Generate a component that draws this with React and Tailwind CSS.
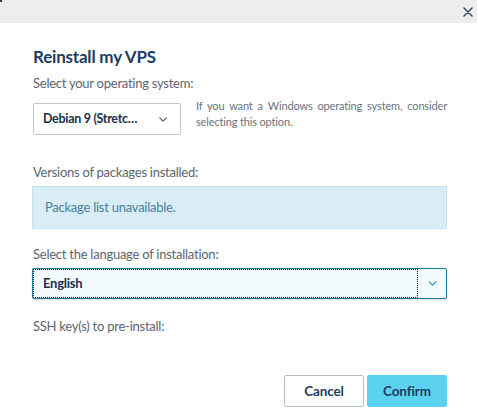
import React from 'react';

function Chevron({ className }) {
  return (
    <svg viewBox="0 0 10 6" className={className} fill="none" stroke="currentColor" strokeWidth="1.4" strokeLinecap="round" strokeLinejoin="round">
      <path d="M1 1l4 4 4-4" />
    </svg>
  );
}

export default function App() {
  return (
    <div
      className="relative h-[417px] w-[477px] overflow-hidden bg-white text-[#5b6570]"
      style={{ fontFamily: 'Lato, "Noto Sans", sans-serif' }}
    >
      <span className="absolute left-0 top-0 h-[2px] w-[2px] bg-[#1b3a5f]" />
      <header className="flex h-[23px] items-center justify-end bg-[#ecedec] pr-[4px]">
        <svg viewBox="0 0 10 10" className="h-[10px] w-[10px] text-[#3d4b5e]" fill="none" stroke="currentColor" strokeWidth="1.5" strokeLinecap="round">
          <path d="M1 1l8 8M9 1l-8 8" />
        </svg>
      </header>

      <div className="pl-[33px] pr-[30px]">
        <h1 className="mt-[22px] text-[17px] font-bold leading-[24px] tracking-[-0.2px] text-[#1c3c62]">Reinstall my VPS</h1>
        <p className="mt-[4px] text-[13px] leading-[20px] tracking-[-0.25px]">Select your operating system:</p>

        <div className="mt-[10px] flex items-start">
          <button className="flex h-[32px] w-[148px] shrink-0 items-center justify-between rounded-[2px] border border-[#c3c8cd] bg-white pl-[9px] pr-[13px] text-[12.5px] font-bold tracking-[-0.3px] text-[#1b2f4b]">
            <span>Debian 9 (Stretc…</span>
            <Chevron className="h-[5px] w-[8px] text-[#4a5768]" />
          </button>
          <p className="-mt-[5px] ml-[15px] text-justify text-[11px] leading-[16px] tracking-[-0.15px] text-[#6a737d]">
            If you want a Windows operating system, consider selecting this option.
          </p>
        </div>

        <p className="mt-[27px] text-[13px] leading-[20px] tracking-[-0.25px]">Versions of packages installed:</p>
        <div className="-ml-[1px] mt-[4px] flex h-[43px] items-center border border-[#c2e4f1] bg-[#d9edf6] px-[12px] text-[13px] tracking-[-0.25px] text-[#4a7e9c]">
          Package list unavailable.
        </div>

        <p className="mt-[15px] text-[13px] leading-[20px] tracking-[-0.25px]">Select the language of installation:</p>
        <div className="-ml-[1px] mt-[4px] flex h-[31px] rounded-[2px] border border-[#1a7d9d] bg-[#f3fbfe] shadow-[0_1px_2px_rgba(0,0,0,0.15)]">
          <div className="flex flex-1 items-center border border-dotted border-[#111] pl-[9px] text-[13px] font-bold tracking-[-0.25px] text-[#1b2f4b]">
            English
          </div>
          <div className="flex w-[28px] items-center justify-center">
            <Chevron className="h-[5px] w-[9px] text-[#1f8fb6]" />
          </div>
        </div>

        <p className="mt-[17px] text-[13px] leading-[20px] tracking-[-0.25px]">SSH key(s) to pre-install:</p>

        <div className="mt-[39px] flex justify-end gap-[3px]">
          <button className="h-[32px] w-[80px] rounded-[2px] border border-[#b7bec6] bg-white text-[13.5px] font-bold tracking-[-0.1px] text-[#1c3c62]">
            Cancel
          </button>
          <button className="h-[32px] w-[80px] rounded-[2px] bg-[#5bd3f0] text-[13.5px] font-bold tracking-[-0.1px] text-[#1c3c62]">
            Confirm
          </button>
        </div>
      </div>
    </div>
  );
}
